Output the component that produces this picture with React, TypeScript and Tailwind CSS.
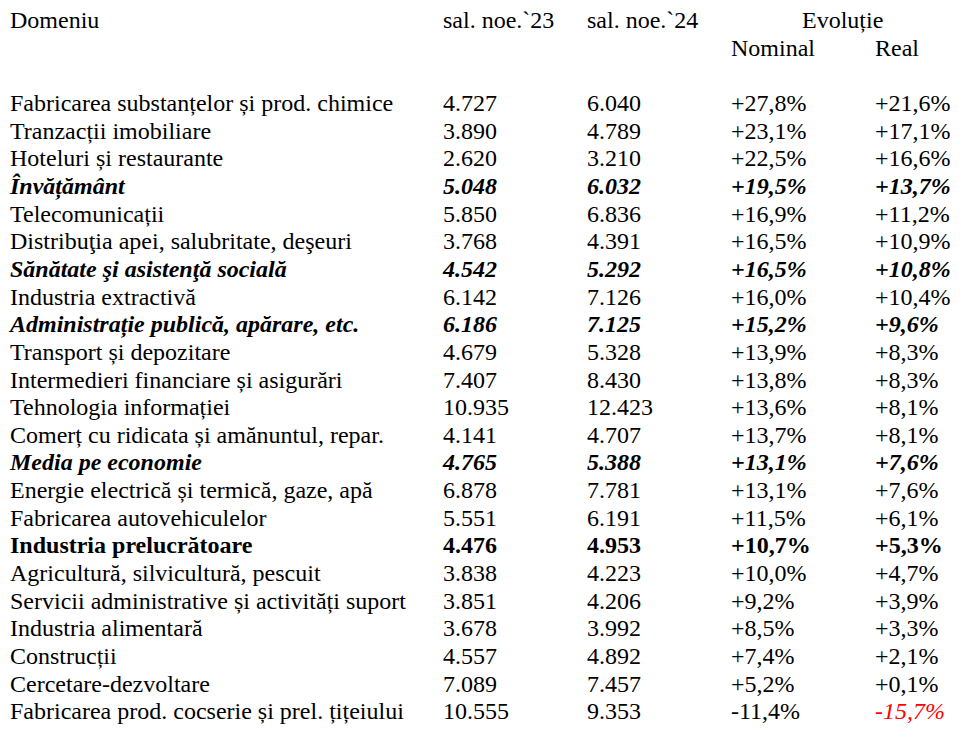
import type { ReactNode } from 'react';

type Row = {
  name: string;
  s23: string;
  s24: string;
  nom: string;
  real: string;
  style?: 'bi' | 'b';
  realRed?: boolean;
};

const ROWS: Row[] = [
  { name: 'Fabricarea substanțelor și prod. chimice', s23: '4.727', s24: '6.040', nom: '+27,8%', real: '+21,6%' },
  { name: 'Tranzacții imobiliare', s23: '3.890', s24: '4.789', nom: '+23,1%', real: '+17,1%' },
  { name: 'Hoteluri și restaurante', s23: '2.620', s24: '3.210', nom: '+22,5%', real: '+16,6%' },
  { name: 'Învățământ', s23: '5.048', s24: '6.032', nom: '+19,5%', real: '+13,7%', style: 'bi' },
  { name: 'Telecomunicații', s23: '5.850', s24: '6.836', nom: '+16,9%', real: '+11,2%' },
  { name: 'Distribuţia apei, salubritate, deşeuri', s23: '3.768', s24: '4.391', nom: '+16,5%', real: '+10,9%' },
  { name: 'Sănătate şi asistenţă socială', s23: '4.542', s24: '5.292', nom: '+16,5%', real: '+10,8%', style: 'bi' },
  { name: 'Industria extractivă', s23: '6.142', s24: '7.126', nom: '+16,0%', real: '+10,4%' },
  { name: 'Administrație publică, apărare, etc.', s23: '6.186', s24: '7.125', nom: '+15,2%', real: '+9,6%', style: 'bi' },
  { name: 'Transport și depozitare', s23: '4.679', s24: '5.328', nom: '+13,9%', real: '+8,3%' },
  { name: 'Intermedieri financiare și asigurări', s23: '7.407', s24: '8.430', nom: '+13,8%', real: '+8,3%' },
  { name: 'Tehnologia informației', s23: '10.935', s24: '12.423', nom: '+13,6%', real: '+8,1%' },
  { name: 'Comerț cu ridicata și amănuntul, repar.', s23: '4.141', s24: '4.707', nom: '+13,7%', real: '+8,1%' },
  { name: 'Media pe economie', s23: '4.765', s24: '5.388', nom: '+13,1%', real: '+7,6%', style: 'bi' },
  { name: 'Energie electrică și termică, gaze, apă', s23: '6.878', s24: '7.781', nom: '+13,1%', real: '+7,6%' },
  { name: 'Fabricarea autovehiculelor', s23: '5.551', s24: '6.191', nom: '+11,5%', real: '+6,1%' },
  { name: 'Industria prelucrătoare', s23: '4.476', s24: '4.953', nom: '+10,7%', real: '+5,3%', style: 'b' },
  { name: 'Agricultură, silvicultură, pescuit', s23: '3.838', s24: '4.223', nom: '+10,0%', real: '+4,7%' },
  { name: 'Servicii administrative și activități suport', s23: '3.851', s24: '4.206', nom: '+9,2%', real: '+3,9%' },
  { name: 'Industria alimentară', s23: '3.678', s24: '3.992', nom: '+8,5%', real: '+3,3%' },
  { name: 'Construcții', s23: '4.557', s24: '4.892', nom: '+7,4%', real: '+2,1%' },
  { name: 'Cercetare-dezvoltare', s23: '7.089', s24: '7.457', nom: '+5,2%', real: '+0,1%' },
  { name: 'Fabricarea prod. cocserie și prel. țițeiului', s23: '10.555', s24: '9.353', nom: '-11,4%', real: '-15,7%', realRed: true },
];

function Cell({ children, className = '' }: { children: ReactNode; className?: string }) {
  return <div className={`whitespace-nowrap ${className}`}>{children}</div>;
}

export default function App() {
  return (
    <div className="min-h-[737px] w-[974px] bg-white text-black font-['Liberation_Serif',serif] text-[24px] leading-[27.65px] pl-[10px] pt-[7px]">
      <div className="grid grid-cols-[433px_144px_144px_144px_1fr]">
        {/* Header */}
        <Cell>Domeniu</Cell>
        <Cell>sal. noe.`23</Cell>
        <Cell>sal. noe.`24</Cell>
        <Cell className="col-span-2 pl-[71px]">Evoluție</Cell>
        <Cell className="col-start-4">Nominal</Cell>
        <Cell>Real</Cell>
        <div className="col-span-5 h-[27.65px]" />

        {ROWS.map((r, i) => {
          const f = r.style === 'bi' ? 'font-bold italic' : r.style === 'b' ? 'font-bold' : '';
          return (
            <div key={i} className="contents">
              <Cell className={f}>{r.name}</Cell>
              <Cell className={f}>{r.s23}</Cell>
              <Cell className={f}>{r.s24}</Cell>
              <Cell className={f}>{r.nom}</Cell>
              <Cell className={r.realRed ? 'italic text-[#ff0000]' : f}>{r.real}</Cell>
            </div>
          );
        })}
      </div>
    </div>
  );
}
